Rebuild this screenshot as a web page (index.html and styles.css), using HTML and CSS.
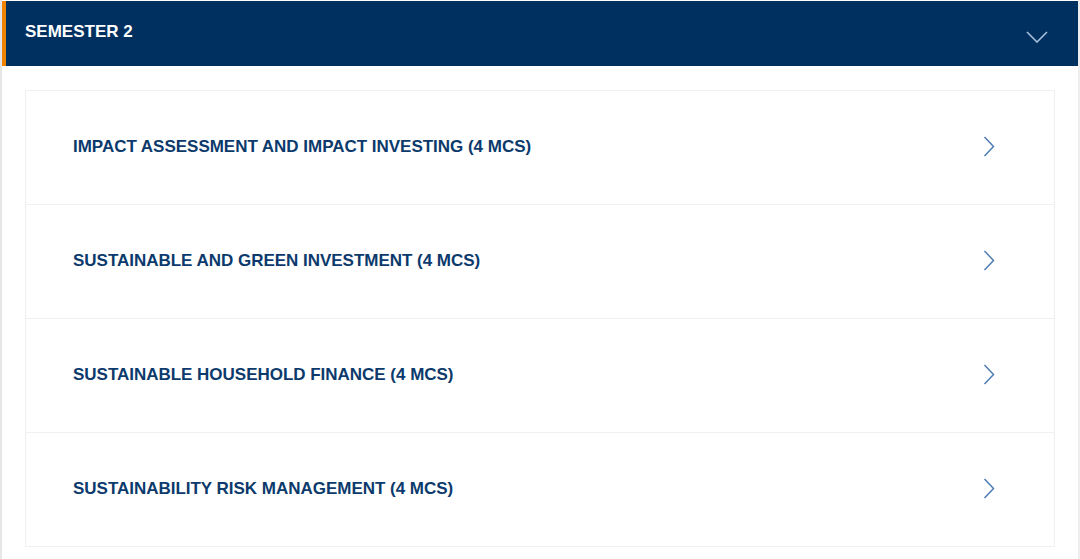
FILE: index.html
```html
<!DOCTYPE html>
<html lang="en">
<head>
<meta charset="utf-8">
<title>Semester 2</title>
<link rel="stylesheet" href="styles.css">
</head>
<body>
<div class="panel">
  <div class="panel-header">
    <span class="panel-title">SEMESTER 2</span>
    <svg class="toggle" width="22" height="12" viewBox="0 0 22 12"><polyline points="1,1 11,11 21,1" fill="none" stroke="#a7bfdb" stroke-width="1.6"/></svg>
  </div>
  <div class="panel-body">
    <ul class="course-list">
      <li class="course"><span class="course-name">IMPACT ASSESSMENT AND IMPACT INVESTING (4 MCS)</span><svg class="chev" width="12" height="21" viewBox="0 0 12 21"><polyline points="1.5,1 10.5,10.5 1.5,20" fill="none" stroke="#4d7cb2" stroke-width="1.5"/></svg></li>
      <li class="course"><span class="course-name">SUSTAINABLE AND GREEN INVESTMENT (4 MCS)</span><svg class="chev" width="12" height="21" viewBox="0 0 12 21"><polyline points="1.5,1 10.5,10.5 1.5,20" fill="none" stroke="#4d7cb2" stroke-width="1.5"/></svg></li>
      <li class="course"><span class="course-name">SUSTAINABLE HOUSEHOLD FINANCE (4 MCS)</span><svg class="chev" width="12" height="21" viewBox="0 0 12 21"><polyline points="1.5,1 10.5,10.5 1.5,20" fill="none" stroke="#4d7cb2" stroke-width="1.5"/></svg></li>
      <li class="course"><span class="course-name">SUSTAINABILITY RISK MANAGEMENT (4 MCS)</span><svg class="chev" width="12" height="21" viewBox="0 0 12 21"><polyline points="1.5,1 10.5,10.5 1.5,20" fill="none" stroke="#4d7cb2" stroke-width="1.5"/></svg></li>
    </ul>
  </div>
</div>
</body>
</html>
```
FILE: styles.css
```css
* { box-sizing: border-box; }
html, body { margin: 0; padding: 0; background: #ffffff; }
body { font-family: "Liberation Sans", Arial, sans-serif; }

.panel {
  border-left: 2px solid #e6e6e6;
  border-right: 2px solid #eeeeee;
  padding-top: 1px;
  min-height: 559px;
}

.panel-header {
  height: 65px;
  background: #003060;
  border-left: 4px solid #f08300;
  display: flex;
  align-items: center;
  justify-content: space-between;
  padding: 0 30px 0 19px;
}

.panel-title {
  color: #ffffff;
  font-weight: bold;
  font-size: 17px;
  letter-spacing: 0;
  margin-top: -3px;
}

.toggle { margin-top: 7px; }

.panel-body {
  padding: 24px 23px;
}

.course-list {
  list-style: none;
  margin: 0;
  padding: 0;
  border: 1px solid #f0f0f0;
}

.course {
  height: 114px;
  display: flex;
  align-items: center;
  justify-content: space-between;
  padding: 0 59px 0 47px;
  border-top: 1px solid #f0f0f0;
}
.course:first-child { border-top: none; height: 113px; }

.course-name {
  color: #0c3a6c;
  font-weight: bold;
  font-size: 17px;
  letter-spacing: -0.02px;
  margin-top: -2px;
}

.chev { margin-top: -2px; }
```
